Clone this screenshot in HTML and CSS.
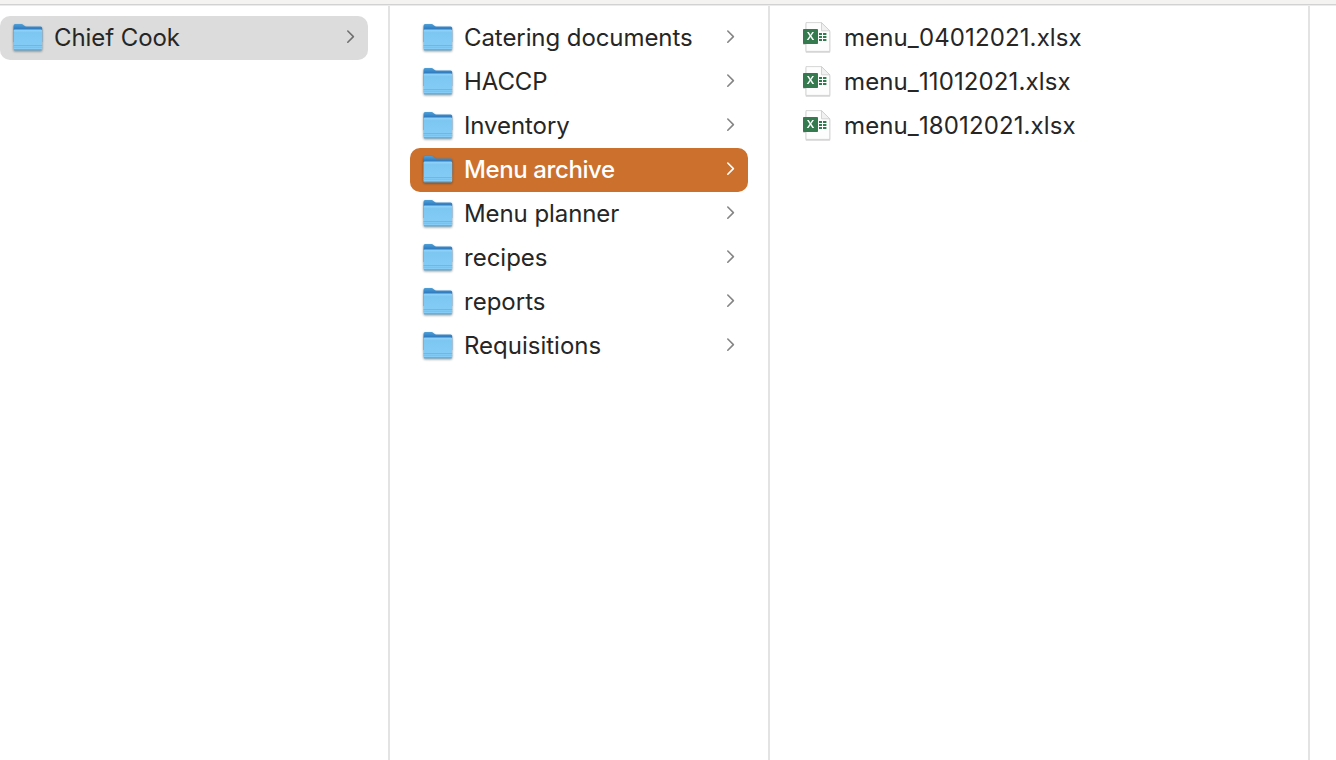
FILE: index.html
```html
<!DOCTYPE html>
<html lang="en">
<head>
    <meta charset="UTF-8">
    <meta name="viewport" content="width=device-width, initial-scale=1.0">
    <title>Menu archive</title>
    <link rel="stylesheet" href="styles.css">
</head>
<body>

    <!-- Shared icons -->
    <svg class="icon-defs" width="0" height="0">
        <defs>
            <linearGradient id="folderBack" x1="0" y1="0" x2="0" y2="1">
                <stop offset="0" stop-color="#4f9fd8"/>
                <stop offset="0.3" stop-color="#2b77bb"/>
            </linearGradient>
            <linearGradient id="folderFront" x1="0" y1="0" x2="0" y2="1">
                <stop offset="0" stop-color="#93d5fb"/>
                <stop offset="0.15" stop-color="#7cc6f2"/>
                <stop offset="1" stop-color="#86cef8"/>
            </linearGradient>
        </defs>
        <symbol id="folder" viewBox="0 0 32 32">
            <path d="M1.5 3.9Q1.5 2.1 3.2 2.1H9.4Q10.6 2.1 11.4 2.9L12.4 3.7Q13.1 4.5 14.2 4.5H28.6Q30.2 4.5 30.2 6.1V20H1.5Z" fill="url(#folderBack)"/>
            <path d="M1.5 9Q1.5 7.6 2.9 7.6H28.8Q30.2 7.6 30.2 9V26.9Q30.2 28.3 28.8 28.3H2.9Q1.5 28.3 1.5 26.9Z" fill="url(#folderFront)"/>
            <path d="M1.5 23.5H30.2" stroke="#66b3e4" stroke-width="0.8"/>
            <path d="M1.5 25.3H30.2" stroke="#70bbea" stroke-width="0.7"/>
            <path d="M2 27.8H29.7" stroke="#559fd2" stroke-width="0.9"/>
        </symbol>
        <symbol id="sheet" viewBox="0 0 32 32">
            <path d="M4 0.6H19.5L27.8 8.8V29.4H4Z" fill="#fdfdfd" stroke="#cbcbcb" stroke-width="0.8"/>
            <path d="M19.5 0.6V8.8H27.8Z" fill="#f1f1f1" stroke="#cacaca" stroke-width="0.8"/>
            <g fill="#2f7d4f">
                <rect x="17" y="11" width="3" height="2"/>
                <rect x="21" y="11" width="3.4" height="2"/>
                <rect x="17" y="14" width="3" height="2"/>
                <rect x="21" y="14" width="3.4" height="2"/>
                <rect x="17" y="17" width="3" height="2"/>
                <rect x="21" y="17" width="3.4" height="2"/>
            </g>
            <rect x="1" y="7" width="15" height="15" rx="0.8" fill="#35794f"/>
        </symbol>
        <symbol id="chevron" viewBox="0 0 10 16">
            <path d="M1.8 2L7.4 7.6L1.8 13.2" fill="none" stroke="currentColor" stroke-width="1.6" stroke-linecap="round" stroke-linejoin="round"/>
        </symbol>
    </svg>

    <div class="toolbar-edge"></div>

    <div class="browser">
        <ul class="column column-root">
            <li class="row current"><svg class="icon folder"><use href="#folder"/></svg><span class="name">Chief Cook</span><svg class="chevron"><use href="#chevron"/></svg></li>
        </ul>

        <ul class="column column-folders">
            <li class="row"><svg class="icon folder"><use href="#folder"/></svg><span class="name">Catering documents</span><svg class="chevron"><use href="#chevron"/></svg></li>
            <li class="row"><svg class="icon folder"><use href="#folder"/></svg><span class="name">HACCP</span><svg class="chevron"><use href="#chevron"/></svg></li>
            <li class="row"><svg class="icon folder"><use href="#folder"/></svg><span class="name">Inventory</span><svg class="chevron"><use href="#chevron"/></svg></li>
            <li class="row selected"><svg class="icon folder"><use href="#folder"/></svg><span class="name">Menu archive</span><svg class="chevron"><use href="#chevron"/></svg></li>
            <li class="row"><svg class="icon folder"><use href="#folder"/></svg><span class="name">Menu planner</span><svg class="chevron"><use href="#chevron"/></svg></li>
            <li class="row"><svg class="icon folder"><use href="#folder"/></svg><span class="name name-loose">recipes</span><svg class="chevron"><use href="#chevron"/></svg></li>
            <li class="row"><svg class="icon folder"><use href="#folder"/></svg><span class="name name-loose">reports</span><svg class="chevron"><use href="#chevron"/></svg></li>
            <li class="row"><svg class="icon folder"><use href="#folder"/></svg><span class="name name-loose">Requisitions</span><svg class="chevron"><use href="#chevron"/></svg></li>
        </ul>

        <ul class="column column-files">
            <li class="row"><svg class="icon file"><use href="#sheet"/><text x="8.5" y="18.3" class="excel-letter">X</text></svg><span class="name">menu_04012021.xlsx</span></li>
            <li class="row"><svg class="icon file"><use href="#sheet"/><text x="8.5" y="18.3" class="excel-letter">X</text></svg><span class="name">menu_11012021.xlsx</span></li>
            <li class="row"><svg class="icon file"><use href="#sheet"/><text x="8.5" y="18.3" class="excel-letter">X</text></svg><span class="name">menu_18012021.xlsx</span></li>
        </ul>
    </div>

</body>
</html>
```
FILE: styles.css
```css
* {
    box-sizing: border-box;
}

body {
    margin: 0;
    height: 100vh;
    display: flex;
    flex-direction: column;
    overflow: hidden;
    background-color: #ffffff;
    color: #262626;
    font-family: Inter, "Liberation Sans", sans-serif;
    font-size: 24px;
}

.icon-defs {
    position: absolute;
}

.toolbar-edge {
    height: 5px;
    flex-shrink: 0;
    background-color: #f4f3f2;
    border-bottom: 1px solid #d2d2d2;
}

.browser {
    flex: 1;
    display: flex;
    border-top: 1px solid #ebebeb;
}

.column {
    margin: 0;
    padding: 10px 20px;
    list-style: none;
    border-right: 2px solid #e3e3e3;
}

.column-root {
    width: 390px;
    padding-left: 0;
}

.column-folders {
    width: 380px;
}

.column-files {
    width: 540px;
}

.row {
    display: flex;
    align-items: center;
    height: 44px;
    padding: 0 12px;
    border-radius: 10px;
}

.icon {
    width: 32px;
    height: 32px;
    margin-right: 10px;
    flex-shrink: 0;
}

.folder {
    filter: drop-shadow(0 1px 0.8px rgba(0, 0, 0, 0.4));
}

.file {
    filter: drop-shadow(0 1px 0.6px rgba(0, 0, 0, 0.15));
}

.excel-letter {
    font-size: 11px;
    font-weight: 600;
    text-anchor: middle;
    fill: #ffffff;
}

.name {
    flex: 1;
    line-height: 44px;
    letter-spacing: -0.08px;
    white-space: nowrap;
}

.name-loose {
    letter-spacing: 0;
}

.column-files .name {
    font-kerning: none;
    letter-spacing: 0.12px;
}

.chevron {
    width: 10px;
    height: 16px;
    margin-bottom: 2px;
    color: #858585;
}

.current {
    background-color: #dcdcdc;
}

.current .chevron {
    color: #707070;
}

.selected {
    background-color: #cb702d;
    color: #ffffff;
}

.selected .name {
    font-weight: 500;
    letter-spacing: -0.4px;
}

.selected .chevron {
    color: #ffffff;
}
```
